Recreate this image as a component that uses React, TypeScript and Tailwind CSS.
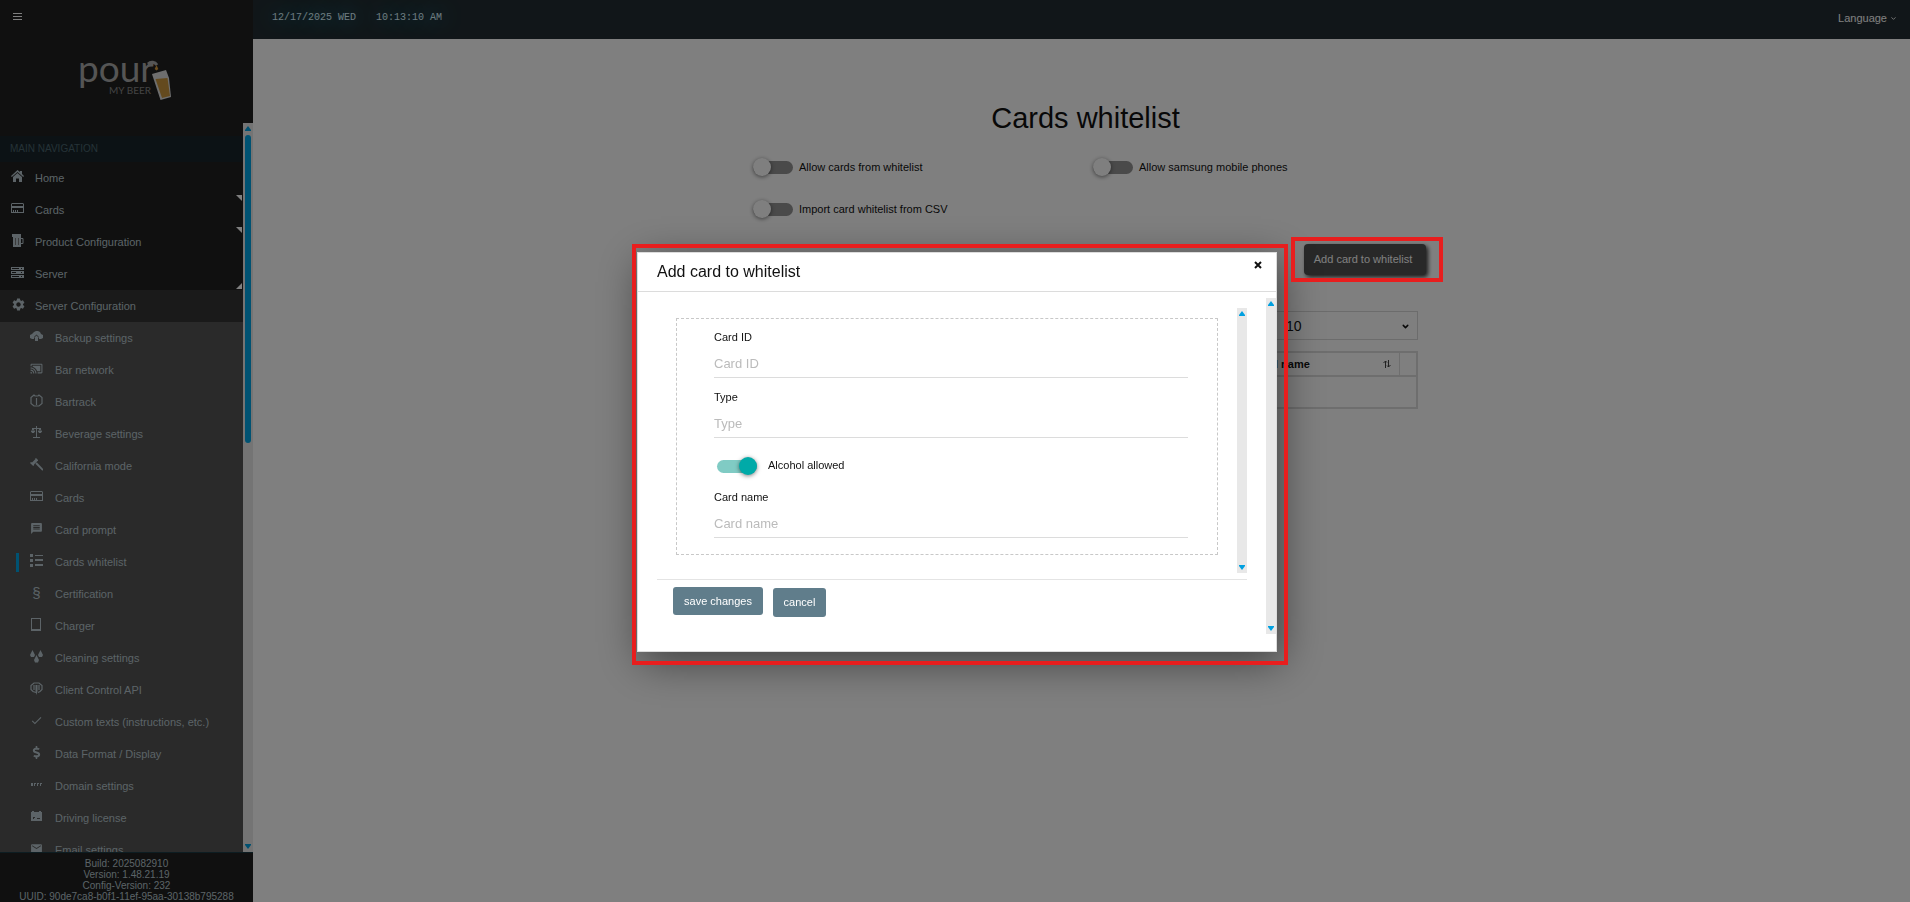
import { useState, type ReactNode } from "react";
import { FaDollarSign } from "react-icons/fa";
import { MdCastConnected, MdCheck, MdEmail, MdMessage, MdSettings } from "react-icons/md";
import { ChevronDown } from "lucide-react";

/* Small hand drawn icons on a 13px grid */
function Glyph({ children }: { children: ReactNode }) {
  return (
    <svg viewBox="0 0 13 13" className="w-[13px] h-[13px]" fill="currentColor" aria-hidden="true">
      {children}
    </svg>
  );
}

const HomeIcon = () => (
  <Glyph>
    <path d="M6.500 0L9 2V1h2v3l2 2-.8.9-5.700-5-5.700 5L0 6z" />
    <path d="M6.500 3L11 7v5H8V8.500H5V12H2V7z" />
  </Glyph>
);

const CardIcon = () => (
  <Glyph>
    <path fillRule="evenodd" d="M1 1h11l1 1v9H0V2zM1 2v2h11V2zM1 6v4h11V6z" />
    <path d="M2 8h1v2H2zM4 8h1v2H4zM6 8h1v2H6z" />
  </Glyph>
);

const BeerIcon = () => (
  <Glyph>
    <path d="M1 0h9v3H1z" />
    <path d="M2 3h8v10H2z" />
    <path d="M10 4.500h2v5h-2" fill="none" stroke="currentColor" />
    <path d="M4.500 4v7M7.500 4v7" stroke="#777" />
  </Glyph>
);

const ServerIcon = () => (
  <Glyph>
    <path
      fillRule="evenodd"
      d="M0 1h13v3H0zM1 2v1h7V2zM10 2v1h1V2zM0 5h13v3H0zM1 6v1h4V6zM10 6v1h1V6zM0 9h13v3H0zM1 10v1h7v-1zM10 10v1h1v-1z"
    />
  </Glyph>
);

const CloudIcon = () => (
  <Glyph>
    <path d="M4 2l2-1h2l2 1 1 2 2 1v3l-2 1H9V7L6.500 4.500 4 7v2H2L0 8V5l2-1z" />
    <path d="M6.500 5.500L9 8H8v3H5V8H4z" />
  </Glyph>
);

const TrackIcon = () => (
  <Glyph>
    <path
      d="M4 1 1 3.500v6L4 12h5l3-2.500v-6L9 1 8 2H5zM6.500 4v7"
      fill="none"
      stroke="currentColor"
      strokeWidth="1.200"
    />
  </Glyph>
);

const ScaleIcon = () => (
  <Glyph>
    <path
      d="M6.500 0v11M3 11.500h7M2 2.500h9M3 2L1.500 6M3 2l1.500 4M10 2L8.500 6M10 2l1.500 4"
      fill="none"
      stroke="currentColor"
    />
    <path d="M1 5h4L4 7H2zM8 5h4l-1 2H9z" />
  </Glyph>
);

const GavelIcon = () => (
  <Glyph>
    <path d="M0 5l1-1 1 .5L5.500 1 5 .8 6 0l2 2v1L7.500 3 4 6.500l.2.5-1 1z" />
    <path d="M6 5l7 7" stroke="currentColor" strokeWidth="1.800" />
  </Glyph>
);

const ListIcon = () => (
  <Glyph>
    <path d="M0 0h3v3H0zM5 1h8v1H5zM0 5h3v3H0zM5 5h8v2H5zM0 10h3v3H0zM5 10h8v2H5z" />
  </Glyph>
);

const TabletIcon = () => (
  <Glyph>
    <path fillRule="evenodd" d="M1 0h10v13H1zM2 1v10h8V1z" />
  </Glyph>
);

const DropsIcon = () => (
  <Glyph>
    <path d="M2.500 0l2.500 5-1 2H1L0 5zM10.500 0L13 5l-1 2H9L8 5zM6.500 5L9 10l-1 2.500H5L4 10z" />
  </Glyph>
);

const ApiIcon = () => (
  <Glyph>
    <path
      d="M6 10.500 3 9.500 1 7.500v-4L4 1h5l3 2.500v4l-2 2-2 1M4 3v5M9 3v5"
      fill="none"
      stroke="currentColor"
      strokeWidth="1.200"
    />
    <path d="M5.500 3h2v6l-1 4-1-4z" />
  </Glyph>
);

const DotsIcon = () => (
  <Glyph>
    <path d="M1 5h2v3H1zM4 5h2v1H5v2H4zM7 5h2v1H8v2H7zM10 5h2v1h-1v2h-1z" />
  </Glyph>
);

const LicenseIcon = () => (
  <Glyph>
    <path
      fillRule="evenodd"
      d="M2 1h2v1h5V1h2v1h1v9H1V2h1zM3 7v2h1V8h1V7zM7 8v1h3V8z"
    />
  </Glyph>
);

const SectionIcon = () => (
  <span className="block w-[13px] text-center text-[15px] leading-[13px]" aria-hidden="true">
    §
  </span>
);

const mainItems = [
  { label: "Home", icon: <HomeIcon /> },
  { label: "Cards", icon: <CardIcon />, corner: "top" },
  { label: "Product Configuration", icon: <BeerIcon />, corner: "top" },
  { label: "Server", icon: <ServerIcon />, corner: "bottom" },
  { label: "Server Configuration", icon: <MdSettings size={15} />, open: true },
];

const subItems = [
  { label: "Backup settings", icon: <CloudIcon /> },
  { label: "Bar network", icon: <MdCastConnected size={13} /> },
  { label: "Bartrack", icon: <TrackIcon /> },
  { label: "Beverage settings", icon: <ScaleIcon /> },
  { label: "California mode", icon: <GavelIcon /> },
  { label: "Cards", icon: <CardIcon /> },
  { label: "Card prompt", icon: <MdMessage size={13} /> },
  { label: "Cards whitelist", icon: <ListIcon />, active: true },
  { label: "Certification", icon: <SectionIcon /> },
  { label: "Charger", icon: <TabletIcon /> },
  { label: "Cleaning settings", icon: <DropsIcon /> },
  { label: "Client Control API", icon: <ApiIcon /> },
  { label: "Custom texts (instructions, etc.)", icon: <MdCheck size={13} /> },
  { label: "Data Format / Display", icon: <FaDollarSign size={13} /> },
  { label: "Domain settings", icon: <DotsIcon /> },
  { label: "Driving license", icon: <LicenseIcon /> },
  { label: "Email settings", icon: <MdEmail size={13} /> },
];

export default function App() {
  const [isOpen, setIsOpen] = useState(true);

  return (
    <div className="flex min-h-screen bg-white font-['Liberation_Sans',Arial,sans-serif] text-[11px] text-[#111]">
      <Sidebar />

      <div className="flex min-w-0 flex-1 flex-col">
        <Topbar />

        <main className="flex flex-1 justify-center pt-[61px] pl-2">
          <div className="w-full max-w-[665px]">
            <h1 className="text-center text-[29px] leading-9">Cards whitelist</h1>

            <div className="mt-[22px] grid grid-cols-2 gap-x-[15px] gap-y-6">
              <Switch label="Allow cards from whitelist" />
              <Switch label="Allow samsung mobile phones" />
              <Switch label="Import card whitelist from CSV" />
            </div>

            <div className="-mr-2 mt-[26px] flex justify-end">
              <div className="relative">
                <button
                  type="button"
                  onClick={() => setIsOpen(true)}
                  className="h-[31px] w-[122px] rounded bg-[#505050] pr-1 text-white shadow-[2px_2px_4px_rgba(0,0,0,0.8)]"
                >
                  Add card to whitelist
                </button>
                <div className="pointer-events-none absolute -top-[7px] -right-[17px] -bottom-[7px] -left-[13px] z-30 border-4 border-[#e81e1e]" />
              </div>
            </div>

            <div className="mt-9 flex justify-end">
              <div className="relative">
                <select
                  aria-label="Rows per page"
                  defaultValue="10"
                  className="block h-[29px] w-[147px] appearance-none border border-[#d8d8d8] bg-transparent pl-[14px] text-sm"
                >
                  <option>10</option>
                  <option>25</option>
                  <option>50</option>
                </select>
                <ChevronDown
                  className="pointer-events-none absolute top-[11px] right-2 h-[9px] w-[9px]"
                  strokeWidth={4}
                />
              </div>
            </div>

            <table className="mt-[11px] w-full table-fixed border-separate border-spacing-0 border-2 border-[#dcdcdc] text-left">
              <thead>
                <tr className="h-[24px]">
                  <th className="border-r border-b-2 border-[#dcdcdc] px-2">Card ID</th>
                  <th className="border-r border-b-2 border-[#dcdcdc] px-2">Type</th>
                  <th className="w-[155px] border-r border-b-2 border-[#dcdcdc] px-2">
                    <span className="flex items-center justify-between">
                      Card name
                      <SortIcon />
                    </span>
                  </th>
                  <th className="w-4 border-b-2 border-[#dcdcdc]" />
                </tr>
              </thead>
              <tbody>
                <tr className="h-[30px]">
                  <td colSpan={4} />
                </tr>
              </tbody>
            </table>
          </div>
        </main>
      </div>

      {isOpen && <CardModal onClose={() => setIsOpen(false)} />}
    </div>
  );
}

function Sidebar() {
  return (
    <aside className="flex h-screen w-[253px] shrink-0 flex-col bg-[#202020] text-[#b8c7ce]">
      <div className="flex h-[123px] flex-col px-3 pt-[11px]">
        <button type="button" aria-label="Toggle menu" className="h-3 w-3 self-start text-white">
          <svg viewBox="0 0 12 12" className="h-3 w-3" stroke="currentColor">
            <path d="M1 2.500h9M1 5.500h9M1 8.500h9" />
          </svg>
        </button>
        <a href="#home" className="mt-[35px] self-center" aria-label="Pour my beer">
          <Logo />
        </a>
      </div>

      {/* Navigation */}
      <div className="flex min-h-0 flex-1">
        <nav className="min-w-0 flex-1 overflow-hidden pt-[13px]">
          <h2 className="h-[26px] bg-[#18242a] pl-[10px] text-[10px] leading-[26px] text-[#4b646f]">
            MAIN NAVIGATION
          </h2>
          <ul>
            {mainItems.map((item) => (
              <li key={item.label} className={item.open ? "bg-[#343434]" : ""}>
                <a href="#nav" className="relative flex h-8 items-center pl-[11px]">
                  <span className="flex w-6 pb-1">{item.icon}</span>
                  <span>{item.label}</span>
                  {item.corner && (
                    <svg
                      viewBox="0 0 6 6"
                      className={
                        item.corner === "top"
                          ? "absolute top-px right-px h-1.5 w-1.5"
                          : "absolute right-px bottom-px h-1.5 w-1.5"
                      }
                      fill="#fff"
                    >
                      <path d={item.corner === "top" ? "M0 0h6v6z" : "M6 0v6H0z"} />
                    </svg>
                  )}
                </a>
              </li>
            ))}
          </ul>
          <ul className="bg-[#545454]">
            {subItems.map((item) => (
              <li key={item.label}>
                <a href="#nav" className="flex h-8 items-center pl-4">
                  <span className={item.active ? "h-[19px] w-[3px] bg-[#00a5e5]" : "h-[19px] w-[3px]"} />
                  <span className="ml-[11px] flex w-[25px] pb-1">{item.icon}</span>
                  <span>{item.label}</span>
                </a>
              </li>
            ))}
          </ul>
        </nav>
        <ScrollTrack>
          <div className="mt-[3px] h-[308px] w-1.5 rounded-full bg-[#00a5e5]" />
        </ScrollTrack>
      </div>

      <div className="border-t border-[#1a3a44] pt-[5px] text-center text-[10px] leading-[11px]">
        <p>Build: 2025082910</p>
        <p>Version: 1.48.21.19</p>
        <p>Config-Version: 232</p>
        <p>UUID: 90de7ca8-b0f1-11ef-95aa-30138b795288</p>
      </div>
    </aside>
  );
}

function Topbar() {
  return (
    <header className="flex h-[39px] items-center justify-between bg-[#222d32] pr-[13px] pb-0.5 pl-[19px] text-white">
      <div className="flex gap-5 pb-0.5 font-['Liberation_Mono',monospace] text-[10px] text-[#daf6ff] [text-shadow:0_0_20px_#0aafe6]">
        <span>12/17/2025 WED</span>
        <span>10:13:10 AM</span>
      </div>
      <button type="button" className="flex items-center gap-[3px]">
        Language
        <ChevronDown className="h-[7px] w-[7px]" strokeWidth={3} />
      </button>
    </header>
  );
}

function CardModal({ onClose }: { onClose: () => void }) {
  const handleSubmit = (e: React.FormEvent) => {
    e.preventDefault();
    onClose();
  };

  return (
    <>
      <div className="fixed inset-0 z-10 bg-black/50" />
      <div className="fixed inset-0 z-20 flex items-center justify-center pt-0.5 pl-1">
        <div className="relative w-[640px]">
          <div className="pointer-events-none absolute -top-2 -right-[11px] -bottom-[13px] -left-[5px] z-10 border-4 border-[#e81e1e]" />

          <div
            role="dialog"
            aria-labelledby="modal-title"
            className="flex h-[400px] flex-col border border-[#dcdcdc] bg-white shadow-[4px_10px_40px_rgba(0,0,0,0.5)]"
          >
            {/* Header */}
            <div className="flex h-[39px] items-center justify-between border-b border-[#dcdcdc] pr-[13px] pl-[19px]">
              <h2 id="modal-title" className="text-base">
                Add card to whitelist
              </h2>
              <button type="button" aria-label="Close" onClick={onClose} className="mb-[15px] p-px">
                <svg viewBox="0 0 8 8" className="h-2 w-2" stroke="#111" strokeWidth="2">
                  <path d="M1 1l6 6M7 1L1 7" />
                </svg>
              </button>
            </div>

            {/* Form */}
            <div className="flex min-h-0 flex-1 pt-1.5 pb-[17px]">
              <form onSubmit={handleSubmit} className="min-w-0 flex-1 pt-[10px] pr-[19px] pl-[19px]">
                <div className="flex h-[265px]">
                  <div className="min-w-0 flex-1 pt-[10px] pr-[19px] pl-[19px]">
                    <div className="flex flex-col gap-[11px] border border-dashed border-[#c8c8c8] pt-[10px] pr-[29px] pb-4 pl-[37px]">
                      <Field id="card-id" label="Card ID" />
                      <Field id="card-type" label="Type" />
                      <div className="flex h-[29px] items-center pt-1 pl-[3px]">
                        <Switch label="Alcohol allowed" defaultChecked wide />
                      </div>
                      <Field id="card-name" label="Card name" />
                    </div>
                  </div>
                  <ScrollTrack />
                </div>

                <div className="mt-1.5 flex gap-[10px] border-t border-[#e4e4e4] pt-[7px] pl-4">
                  <button type="submit" className="h-7 w-[90px] rounded-[3px] bg-[#607d8b] text-white">
                    save changes
                  </button>
                  <button
                    type="button"
                    onClick={onClose}
                    className="mt-px h-[29px] w-[53px] rounded-[3px] bg-[#607d8b] text-white"
                  >
                    cancel
                  </button>
                </div>
              </form>
              <ScrollTrack />
            </div>
          </div>
        </div>
      </div>
    </>
  );
}

function Field({ id, label }: { id: string; label: string }) {
  return (
    <div>
      <label htmlFor={id} className="mb-1 block leading-4">
        {label}
      </label>
      <input
        id={id}
        type="text"
        placeholder={label}
        className="block h-[29px] w-full border-b border-[#dcdcdc] text-[13px] outline-none placeholder:text-[#bbb]"
      />
    </div>
  );
}

function Switch({
  label,
  defaultChecked,
  wide,
}: {
  label: string;
  defaultChecked?: boolean;
  wide?: boolean;
}) {
  return (
    <label className={wide ? "flex h-[18px] items-center gap-[11px]" : "flex h-[18px] items-center gap-1.5"}>
      <input
        type="checkbox"
        role="switch"
        defaultChecked={defaultChecked}
        className="relative h-[18px] w-10 appearance-none before:absolute before:inset-x-0 before:top-[3px] before:h-[13px] before:rounded-full before:bg-[#949494] after:absolute after:top-0 after:left-0 after:h-[18px] after:w-[18px] after:rounded-full after:bg-white after:shadow-[0_1px_4px_rgba(0,0,0,0.5)] checked:before:bg-[#80cbc4] checked:after:left-[22px] checked:after:bg-[#00aaa8]"
      />
      {label}
    </label>
  );
}

function ScrollTrack({ children }: { children?: ReactNode }) {
  return (
    <div className="flex w-[10px] shrink-0 flex-col items-center bg-[#e8e8e8] pt-[3px] pb-[3px]" aria-hidden="true">
      <svg viewBox="0 0 6 6" className="h-1.5 w-1.5" fill="#00a0e0">
        <path d="M3 0l3 4v1H0V4z" />
      </svg>
      {children}
      <svg viewBox="0 0 6 6" className="mt-auto h-1.5 w-1.5" fill="#00a0e0">
        <path d="M3 6l3-4V1H0v1z" />
      </svg>
    </div>
  );
}

function SortIcon() {
  return (
    <svg viewBox="0 0 8 8" className="h-2 w-2" fill="none" stroke="#444" aria-hidden="true">
      <path d="M2.500 8V1M.5 3l2-2 1.500 1.500M5.500 0v7M7.500 5l-2 2L4 5.500" />
    </svg>
  );
}

function Logo() {
  return (
    <svg viewBox="0 0 94 44" className="h-11 w-[94px] overflow-visible" aria-hidden="true">
      <text x="-2" y="24" fontFamily="Lato, sans-serif" fontSize="37" fill="#aaa">
        pour
      </text>
      <text x="29" y="36" fontFamily="Lato, sans-serif" fontSize="10" fill="#888">
        MY BEER
      </text>
      <path d="M68 6c3-3 7-2 9 1" fill="none" stroke="#aaa" strokeWidth="3" />
      <path d="M76.500 7l1.800 4-1.800 1.500-1.800-1.500z" fill="#d89a3a" />
      <path d="M72 16l14-4 3 8 2 19-10.500 3z" fill="#ddd" />
      <path d="M75.500 21l12-1 2.500 18-8 2z" fill="#c9953c" />
    </svg>
  );
}
